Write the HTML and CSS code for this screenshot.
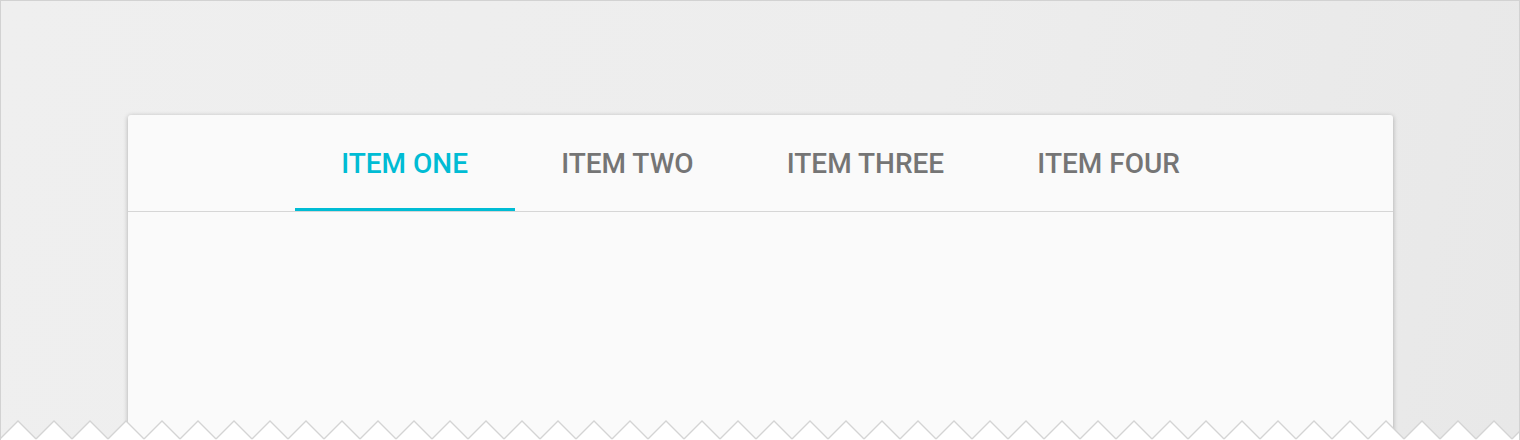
FILE: index.html
```html
<!DOCTYPE html>
<html>
<head>
<meta charset="utf-8">
<link rel="stylesheet" href="styles.css">
</head>
<body>
<div class="frame">
  <div class="card">
    <nav class="tabs">
      <div class="tab active">ITEM ONE</div>
      <div class="tab">ITEM TWO</div>
      <div class="tab">ITEM THREE</div>
      <div class="tab">ITEM FOUR</div>
    </nav>
    <div class="content"></div>
  </div>
  <svg class="tear" width="1520" height="20" viewBox="0 0 1520 20" xmlns="http://www.w3.org/2000/svg">
    <defs>
      <pattern id="zz" x="0" y="0" width="36" height="20" patternUnits="userSpaceOnUse">
        <path d="M0 19 L18 1 L36 19 L36 20 L0 20 Z" fill="#ffffff"/>
        <path d="M0 19 L18 1 L36 19" fill="none" stroke="#d4d4d4" stroke-width="1.3"/>
      </pattern>
    </defs>
    <rect x="0" y="0" width="1520" height="20" fill="url(#zz)"/>
  </svg>
</div>
</body>
</html>
```

FILE: styles.css
```css
html, body {
  margin: 0;
  padding: 0;
  background: #ffffff;
}

.frame {
  position: relative;
  width: 1520px;
  height: 440px;
  box-sizing: border-box;
  border: 1px solid #d2d2d2;
  border-bottom: none;
  background: linear-gradient(100deg, #efefef 0%, #ededed 60%, #e8e8e8 100%);
  padding: 114px 0 0 127px;
  overflow: hidden;
}

.card {
  width: 1265px;
  height: 400px;
  background: #fafafa;
  border-radius: 3px 3px 0 0;
  box-shadow: 0 1px 5px rgba(0, 0, 0, 0.28);
  display: flex;
  flex-direction: column;
}

.tabs {
  height: 96px;
  border-bottom: 1px solid #d6d6d6;
  display: flex;
  justify-content: center;
  align-items: stretch;
}

.tab {
  position: relative;
  padding: 0 46.6px;
  display: flex;
  align-items: center;
  font-family: Roboto, "Liberation Sans", sans-serif;
  font-weight: 500;
  font-size: 28px;
  color: #757575;
  white-space: nowrap;
}

.tab.active {
  color: #00bcd4;
}

.tab.active::after {
  content: "";
  position: absolute;
  left: 0;
  right: 0;
  bottom: 0;
  height: 3px;
  background: #00bcd4;
}

.content {
  flex: 1;
}

.tear {
  position: absolute;
  left: -1px;
  bottom: 0;
  display: block;
}
```
